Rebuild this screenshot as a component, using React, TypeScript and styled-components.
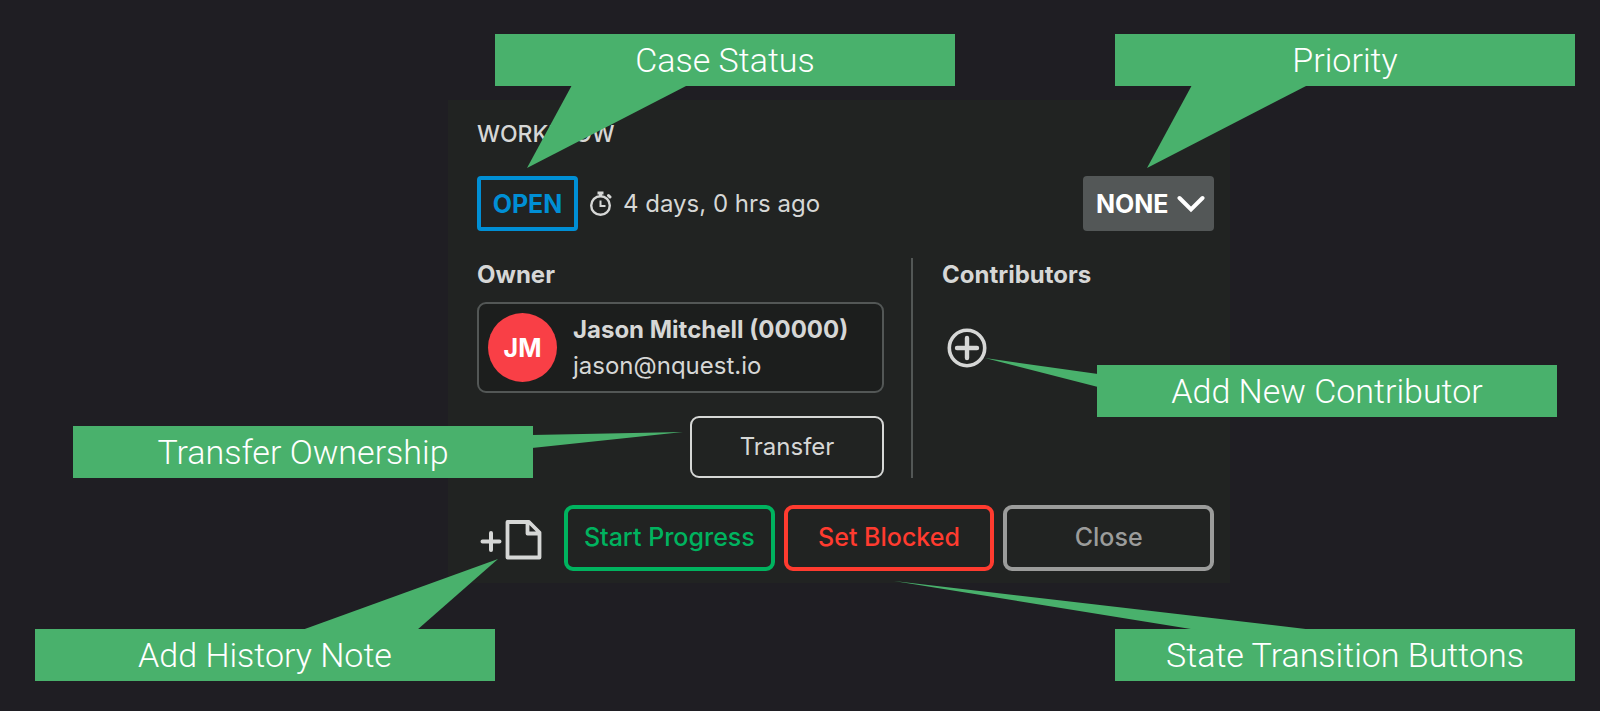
import React from "react";
import styled, { createGlobalStyle } from "styled-components";

const GREEN = "#49b16c";

const GlobalStyle = createGlobalStyle`
  *, *::before, *::after { box-sizing: border-box; }
  body {
    margin: 0;
    background: #1f1e23;
    color: #d6d7d6;
    font-family: Inter, "Liberation Sans", sans-serif;
  }
`;

const Page = styled.main`
  display: grid;
  grid-template-columns: 448fr minmax(720px, 782fr) 370fr;
  min-height: 100vh;
  padding: 100px 0 128px;
  align-items: start;
`;

const Stage = styled.div`
  grid-column: 2;
  position: relative;
`;

const Panel = styled.section`
  display: flex;
  flex-direction: column;
  background: #212322;
  padding: 20px 16px 12px 29px;
`;

const PanelTitle = styled.h2`
  margin: 0;
  font-size: 23px;
  line-height: 28px;
  font-weight: 500;
`;

const StatusRow = styled.div`
  display: flex;
  align-items: center;
  margin-top: 28px;
`;

const StatusBadge = styled.span`
  display: flex;
  align-items: center;
  justify-content: center;
  width: 101px;
  height: 55px;
  border: 4px solid #008fd5;
  border-radius: 4px;
  color: #008fd5;
  font-size: 25px;
  font-weight: 700;
`;

const Age = styled.span`
  display: flex;
  align-items: center;
  gap: 11px;
  margin-left: 12px;
  font-size: 24px;
`;

const PriorityField = styled.label`
  position: relative;
  display: flex;
  align-items: center;
  margin-left: auto;
  color: #fff;

  svg {
    position: absolute;
    right: 9px;
    pointer-events: none;
  }
`;

const PrioritySelect = styled.select`
  appearance: none;
  width: 131px;
  height: 55px;
  padding: 0 13px;
  border: 0;
  border-radius: 4px;
  background: #535757;
  color: #fff;
  font: 700 25px Inter, sans-serif;
`;

const People = styled.div`
  display: flex;
  margin-top: 27px;
`;

const OwnerColumn = styled.div`
  display: flex;
  flex-direction: column;
  flex: 1;
  padding-right: 27px;
`;

const ContributorColumn = styled.div`
  display: flex;
  flex-direction: column;
  align-items: flex-start;
  width: 303px;
  padding-left: 29px;
  border-left: 2px solid #535756;
`;

const ColumnTitle = styled.h3`
  margin: 0;
  font-size: 24px;
  line-height: 34px;
  font-weight: 700;
`;

const OwnerCard = styled.div`
  display: flex;
  align-items: center;
  gap: 16px;
  height: 91px;
  margin-top: 10px;
  padding: 0 9px;
  border: 2px solid #535756;
  border-radius: 9px;
  background: #1c1e1d;
`;

const Avatar = styled.span`
  display: flex;
  align-items: center;
  justify-content: center;
  flex: none;
  width: 69px;
  height: 69px;
  border-radius: 50%;
  background: #f93f46;
  color: #fff;
  font-size: 25px;
  font-weight: 700;
`;

const Identity = styled.div`
  display: flex;
  flex-direction: column;
  font-size: 24px;
  line-height: 36px;
  white-space: nowrap;
`;

const OwnerName = styled.strong`
  font-weight: 700;
`;

const TransferButton = styled.button`
  align-self: flex-end;
  width: 194px;
  height: 62px;
  margin-top: 23px;
  padding: 0 0 2px;
  border: 2px solid #d6d7d6;
  border-radius: 9px;
  background: transparent;
  color: #d6d7d6;
  font: 400 24px Inter, sans-serif;
`;

const IconButton = styled.button`
  display: flex;
  padding: 0;
  border: 0;
  background: transparent;
  color: #d6d7d6;
`;

const AddContributor = styled(IconButton)`
  margin: 36px 0 0 5px;
`;

const Actions = styled.div`
  display: flex;
  align-items: center;
  gap: 9px;
  margin-top: 27px;
`;

const AddNote = styled(IconButton)`
  flex: none;
  margin-right: 13px;
`;

const StateButton = styled.button<{ $color: string }>`
  flex: 1;
  height: 66px;
  padding: 0 0 2px;
  border: 4px solid ${(p) => p.$color};
  border-radius: 9px;
  background: transparent;
  color: ${(p) => p.$color};
  font: 500 25px Inter, sans-serif;
  white-space: nowrap;
`;

type Place = { top: number; left?: number; right?: number };

const Callout = styled.div<{ $at: Place }>`
  position: absolute;
  top: ${(p) => p.$at.top}px;
  ${(p) => (p.$at.left !== undefined ? `left: ${p.$at.left}px;` : "")}
  ${(p) => (p.$at.right !== undefined ? `right: ${p.$at.right}px;` : "")}
  display: flex;
  align-items: center;
  justify-content: center;
  width: 460px;
  height: 52px;
  background: ${GREEN};
  color: #fff;
  font-family: Roboto, sans-serif;
  font-size: 34px;
  font-weight: 300;
  line-height: 40px;
  white-space: nowrap;
`;

const Pointer = styled.svg`
  position: absolute;
  top: 0;
  left: 0;
  overflow: visible;
  pointer-events: none;
  fill: ${GREEN};
`;

/* Each pointer is drawn in its callout's own coordinates (460 x 52). */
const callouts: { text: string; at: Place; points: string }[] = [
  { text: "Case Status", at: { top: -66, left: 47 }, points: "77,51 193,51 32,134" },
  { text: "Priority", at: { top: -66, right: -345 }, points: "77,51 193,51 32,134" },
  { text: "Add New Contributor", at: { top: 265, right: -327 }, points: "1,9 1,22 -112,-7" },
  { text: "Transfer Ownership", at: { top: 326, left: -375 }, points: "459,9 459,22 610,6" },
  { text: "Add History Note", at: { top: 529, left: -413 }, points: "267,1 382,1 463,-70" },
  { text: "State Transition Buttons", at: { top: 529, right: -345 }, points: "82,1 199,1 -221,-48" },
];

const StopwatchIcon = () => (
  <svg width="22" height="26" viewBox="0 0 22 26" fill="none" stroke="currentColor" aria-hidden="true">
    <circle cx="10.5" cy="14.5" r="9.3" strokeWidth="2.4" />
    <path d="M10.5 9.5V15H15.5" strokeWidth="2" />
    <path d="M7.5 2H13.5M10.5 2V5.5" strokeWidth="3" />
    <path d="M18.5 4.5L20 6" strokeWidth="3" strokeLinecap="round" />
  </svg>
);

const ChevronIcon = () => (
  <svg width="28" height="18" viewBox="0 0 28 18" fill="none" stroke="currentColor" strokeWidth="4" strokeLinecap="round" aria-hidden="true">
    <path d="M2.5 3L14 14.5L25.5 3" />
  </svg>
);

const PlusCircleIcon = () => (
  <svg width="40" height="40" viewBox="0 0 40 40" fill="none" stroke="currentColor" aria-hidden="true">
    <circle cx="20" cy="20" r="17.7" strokeWidth="3.6" />
    <path d="M20 10V30M10 20H30" strokeWidth="4.4" strokeLinecap="round" />
  </svg>
);

const AddNoteIcon = () => (
  <svg width="65" height="46" viewBox="0 0 65 46" fill="none" stroke="currentColor" aria-hidden="true">
    <path d="M14 18V35M5.5 26.5H22.5" strokeWidth="4" strokeLinecap="round" />
    <path d="M30.5 7H52L62.5 17.5V42.5H30.5ZM50.5 7.5V18.5H62" strokeWidth="3.8" strokeLinejoin="round" />
  </svg>
);

export default function App() {
  return (
    <>
      <GlobalStyle />
      <Page>
        <Stage>
          <Panel>
            <PanelTitle>WORKFLOW</PanelTitle>
            <StatusRow>
              <StatusBadge>OPEN</StatusBadge>
              <Age>
                <StopwatchIcon />
                4 days, 0 hrs ago
              </Age>
              <PriorityField>
                <PrioritySelect aria-label="Priority" defaultValue="NONE">
                  <option>NONE</option>
                </PrioritySelect>
                <ChevronIcon />
              </PriorityField>
            </StatusRow>
            <People>
              <OwnerColumn>
                <ColumnTitle>Owner</ColumnTitle>
                <OwnerCard>
                  <Avatar>JM</Avatar>
                  <Identity>
                    <OwnerName>Jason Mitchell (00000)</OwnerName>
                    <span>jason@nquest.io</span>
                  </Identity>
                </OwnerCard>
                <TransferButton type="button">Transfer</TransferButton>
              </OwnerColumn>
              <ContributorColumn>
                <ColumnTitle>Contributors</ColumnTitle>
                <AddContributor type="button" aria-label="Add contributor">
                  <PlusCircleIcon />
                </AddContributor>
              </ContributorColumn>
            </People>
            <Actions>
              <AddNote type="button" aria-label="Add note">
                <AddNoteIcon />
              </AddNote>
              <StateButton type="button" $color="#00b35f">Start Progress</StateButton>
              <StateButton type="button" $color="#ff3b2f">Set Blocked</StateButton>
              <StateButton type="button" $color="#9b9c9b">Close</StateButton>
            </Actions>
          </Panel>
          {callouts.map((c) => (
            <Callout key={c.text} $at={c.at}>
              <Pointer width="460" height="52" aria-hidden="true">
                <polygon points={c.points} />
              </Pointer>
              {c.text}
            </Callout>
          ))}
        </Stage>
      </Page>
    </>
  );
}
